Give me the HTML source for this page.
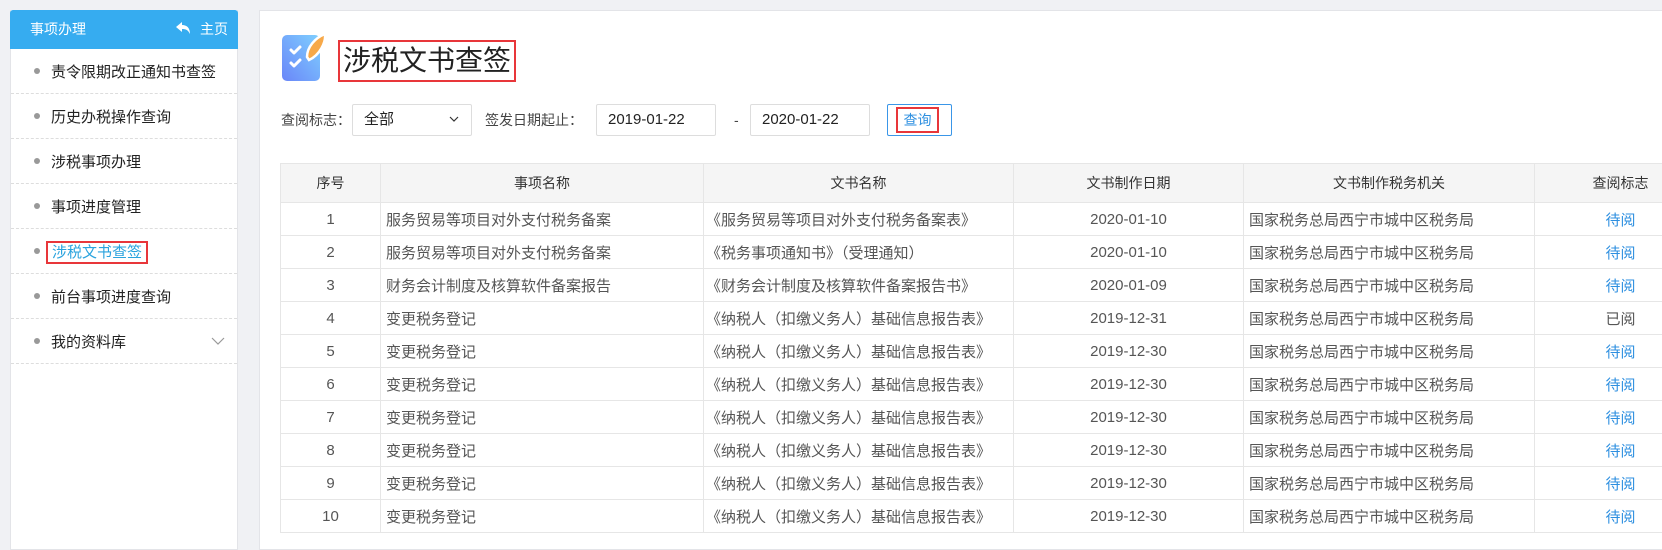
<!DOCTYPE html>
<html><head><meta charset="utf-8">
<style>
*{box-sizing:border-box;margin:0;padding:0}
body{width:1662px;height:542px;overflow:hidden;background:#f0f1f4;font-family:"Liberation Sans","Noto Sans CJK SC",sans-serif;position:relative}
.side{position:absolute;left:10px;top:10px;width:228px;height:540px;background:#fff;border:1px solid #e3e4e8;border-top:none}
.sh{height:39px;background:#36acf0;color:#fff;font-size:14px;line-height:39px;padding-left:20px;position:relative;border-radius:3px 3px 0 0;margin:0 -1px}
.sh .home{position:absolute;right:10px;top:0}
.item{height:45px;border-bottom:1px dashed #ddd;font-size:15px;color:#222;line-height:47px;padding-left:40px;position:relative}
.item:before{content:"";position:absolute;left:23px;top:19px;width:6px;height:6px;border-radius:50%;background:#999}
.main{position:absolute;left:259px;top:10px;width:1410px;height:540px;background:#fff;border:1px solid #e3e4e8;overflow:hidden}
.abs{position:absolute}
.inp{position:absolute;top:93px;height:32px;border:1px solid #ddd;border-radius:2px;font-size:15px;color:#222;line-height:30px;padding-left:11px}
.lbl{position:absolute;top:93px;line-height:32px;font-size:14px;color:#444;white-space:nowrap}
table{position:absolute;left:20px;top:152px;width:1426px;border-collapse:collapse;table-layout:fixed;font-size:15px;color:#555}
td,th{border:1px solid #e6e6e6;height:33px;white-space:nowrap;overflow:hidden;font-weight:normal}
th{background:#f5f5f5;height:39px;color:#333;font-size:14px}
td.c{text-align:center}
td.l{padding-left:5px}
.b{color:#2d8fe0}
</style></head><body>
<div class="side">
<div class="sh">事项办理<span class="home"><svg width="16" height="14" viewBox="0 0 16 14" style="vertical-align:-1px;margin-right:8px"><path d="M6 1 L0 6 L6 11 L6 8 C10 8 12 9 14 13 C14 7 11 4 6 4 Z" fill="#fff"/></svg>主页</span></div>
<div class="item">责令限期改正通知书查签</div>
<div class="item">历史办税操作查询</div>
<div class="item">涉税事项办理</div>
<div class="item">事项进度管理</div>
<div class="item"><span style="color:#2aa3de;border:2px solid #e8363a;padding:1px 4px;margin-left:-5px">涉税文书查签</span></div>
<div class="item">前台事项进度查询</div>
<div class="item">我的资料库<svg width="14" height="8" viewBox="0 0 14 8" style="position:absolute;right:12px;top:18px"><path d="M1 1 L7 7 L13 1" fill="none" stroke="#999" stroke-width="1.2"/></svg></div>
</div>
<div class="main">
<svg class="abs" style="left:22px;top:22px" width="46" height="50" viewBox="0 0 46 50">
<defs><linearGradient id="g" x1="1" y1="0" x2="0" y2="1"><stop offset="0" stop-color="#7fd0ff"/><stop offset="1" stop-color="#6a86f8"/></linearGradient></defs>
<rect x="0" y="2" width="38" height="46" rx="5" fill="url(#g)"/>
<path d="M9 17 L12 20 L18 14 M9 30 L12 33 L18 27" fill="none" stroke="#fff" stroke-width="3" stroke-linecap="round" stroke-linejoin="round"/>
<path d="M25 24 C25 14 33 5 43 1 C44 9 38 22 27 27 Z" fill="#f7a94a" stroke="#fff" stroke-width="2.5"/>
</svg>
<div class="abs" style="left:78px;top:29px;height:42px;width:178px;border:2px solid #e8363a;font-size:28px;color:#222;line-height:38px;padding-left:3px;white-space:nowrap;overflow:hidden">涉税文书查签</div>
<div class="lbl" style="left:21px">查阅标志：</div>
<div class="inp" style="left:92px;width:120px">全部<svg width="10" height="6" viewBox="0 0 10 6" style="position:absolute;right:12px;top:11px"><path d="M1 1 L5 5 L9 1" fill="none" stroke="#333" stroke-width="1.2"/></svg></div>
<div class="lbl" style="left:225px">签发日期起止：</div>
<div class="inp" style="left:336px;width:120px">2019-01-22</div>
<div class="lbl" style="left:474px">-</div>
<div class="inp" style="left:490px;width:120px">2020-01-22</div>
<div class="abs" style="left:627px;top:93px;width:65px;height:32px;border:1px solid #3a96e8;border-radius:2px"></div>
<div class="abs" style="left:636px;top:96px;width:43px;height:26px;border:2px solid #e8363a;color:#2d8fe0;font-size:14px;line-height:22px;text-align:center">查询</div>
<table>
<colgroup><col style="width:100px"><col style="width:323px"><col style="width:310px"><col style="width:230px"><col style="width:291px"><col style="width:172px"></colgroup>
<tr><th>序号</th><th>事项名称</th><th>文书名称</th><th>文书制作日期</th><th>文书制作税务机关</th><th>查阅标志</th></tr>
<tr><td class="c">1</td><td class="l">服务贸易等项目对外支付税务备案</td><td class="l" style="padding-left:2px">《服务贸易等项目对外支付税务备案表》</td><td class="c">2020-01-10</td><td class="l">国家税务总局西宁市城中区税务局</td><td class="c b">待阅</td></tr>
<tr><td class="c">2</td><td class="l">服务贸易等项目对外支付税务备案</td><td class="l" style="padding-left:2px">《税务事项通知书》（受理通知）</td><td class="c">2020-01-10</td><td class="l">国家税务总局西宁市城中区税务局</td><td class="c b">待阅</td></tr>
<tr><td class="c">3</td><td class="l">财务会计制度及核算软件备案报告</td><td class="l" style="padding-left:2px">《财务会计制度及核算软件备案报告书》</td><td class="c">2020-01-09</td><td class="l">国家税务总局西宁市城中区税务局</td><td class="c b">待阅</td></tr>
<tr><td class="c">4</td><td class="l">变更税务登记</td><td class="l" style="padding-left:2px">《纳税人（扣缴义务人）基础信息报告表》</td><td class="c">2019-12-31</td><td class="l">国家税务总局西宁市城中区税务局</td><td class="c">已阅</td></tr>
<tr><td class="c">5</td><td class="l">变更税务登记</td><td class="l" style="padding-left:2px">《纳税人（扣缴义务人）基础信息报告表》</td><td class="c">2019-12-30</td><td class="l">国家税务总局西宁市城中区税务局</td><td class="c b">待阅</td></tr>
<tr><td class="c">6</td><td class="l">变更税务登记</td><td class="l" style="padding-left:2px">《纳税人（扣缴义务人）基础信息报告表》</td><td class="c">2019-12-30</td><td class="l">国家税务总局西宁市城中区税务局</td><td class="c b">待阅</td></tr>
<tr><td class="c">7</td><td class="l">变更税务登记</td><td class="l" style="padding-left:2px">《纳税人（扣缴义务人）基础信息报告表》</td><td class="c">2019-12-30</td><td class="l">国家税务总局西宁市城中区税务局</td><td class="c b">待阅</td></tr>
<tr><td class="c">8</td><td class="l">变更税务登记</td><td class="l" style="padding-left:2px">《纳税人（扣缴义务人）基础信息报告表》</td><td class="c">2019-12-30</td><td class="l">国家税务总局西宁市城中区税务局</td><td class="c b">待阅</td></tr>
<tr><td class="c">9</td><td class="l">变更税务登记</td><td class="l" style="padding-left:2px">《纳税人（扣缴义务人）基础信息报告表》</td><td class="c">2019-12-30</td><td class="l">国家税务总局西宁市城中区税务局</td><td class="c b">待阅</td></tr>
<tr><td class="c">10</td><td class="l">变更税务登记</td><td class="l" style="padding-left:2px">《纳税人（扣缴义务人）基础信息报告表》</td><td class="c">2019-12-30</td><td class="l">国家税务总局西宁市城中区税务局</td><td class="c b">待阅</td></tr>
</table>
</div>
</body></html>
